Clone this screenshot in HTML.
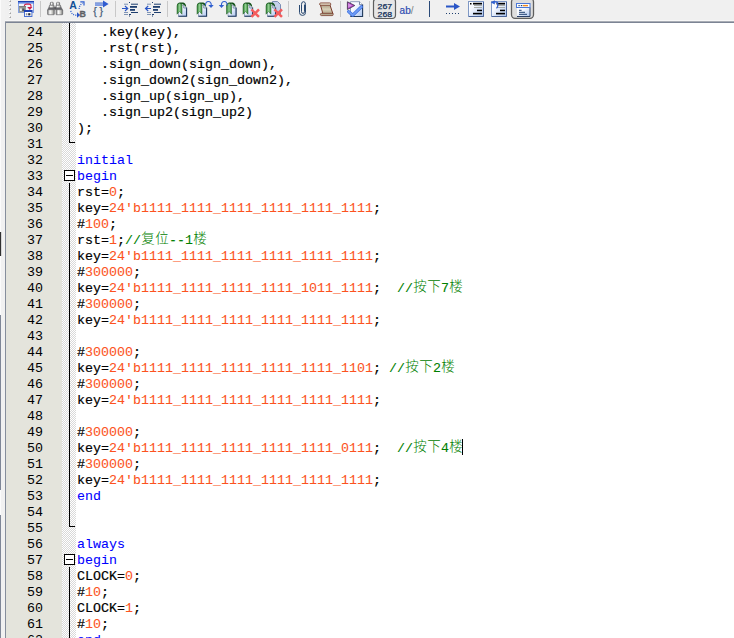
<!DOCTYPE html>
<html lang="zh"><head><meta charset="utf-8"><title>editor</title>
<style>
html,body{margin:0;padding:0;}
body{width:734px;height:638px;overflow:hidden;background:#fff;position:relative;font-family:"Liberation Mono","Noto Sans CJK SC",monospace;}
#tb{position:absolute;left:0;top:0;width:734px;height:21px;background:#f0f0f0;}
#tbline{position:absolute;left:5px;top:20px;width:729px;height:3px;background:linear-gradient(#f7f7f7 1px,#a9adb5 1px,#a9adb5 2px,#7c8494 2px);}
#lstrip{position:absolute;left:0;top:0;width:5px;height:638px;background:linear-gradient(90deg,#fbfbfb 1px,#f1f1f1 1px);}
#lborder{position:absolute;left:5px;top:22px;width:1px;height:616px;background:#868e9c;}
#gut{position:absolute;left:6px;top:23px;width:56px;height:615px;background:#e4e4dc;}
#fold{position:absolute;left:62px;top:23px;width:14px;height:615px;background:#ececec conic-gradient(#ffffff 25%,#d9d9d9 0 50%,#ffffff 0 75%,#d9d9d9 0) 0 0/2px 2px;}
.ln{position:absolute;left:0;height:16px;line-height:16px;font-size:13.33px;white-space:pre;color:#000;}
.num{position:absolute;left:5px;top:2px;width:38px;transform:scaleY(0.89);transform-origin:0 12px;text-align:right;color:#000;}
.code{position:absolute;left:77px;top:2px;-webkit-text-stroke:0.2px currentColor;transform:scaleY(0.89);transform-origin:0 12px;}
i{font-style:normal;-webkit-text-stroke-width:0.08px;}
.k{color:#0000ff;}
.n{color:#fc5220;}
.c{color:#008000;}
b.z{font-weight:300;-webkit-text-stroke-width:0;display:inline-block;width:14px;text-align:center;font-size:13.5px;font-family:"Noto Sans CJK SC","WenQuanYi Zen Hei",sans-serif;vertical-align:top;line-height:16px;height:16px;transform:translateY(-4.5px) scaleY(1.12);}
#caret{position:absolute;left:462px;top:439px;width:1px;height:16px;background:#000;}
svg{position:absolute;left:0;top:0;}
</style></head><body>
<div id="tb"></div>
<div id="lstrip"></div>
<div id="gut"></div>
<div id="fold"></div>
<div id="tbline"></div>
<div id="lborder"></div>
<div id="caret"></div>
<svg id="tbsvg" width="734" height="22" viewBox="0 0 734 22">
<defs>
<linearGradient id="pg" x1="0" y1="0" x2="1" y2="1"><stop offset="0" stop-color="#ffffff"/><stop offset=".35" stop-color="#f6f9ff"/><stop offset="1" stop-color="#a9c3ee"/></linearGradient>
<linearGradient id="gr" x1="0" y1="0" x2="1" y2="0"><stop offset="0" stop-color="#2e7d32"/><stop offset=".5" stop-color="#8fce8f"/><stop offset="1" stop-color="#3c8c40"/></linearGradient>
<linearGradient id="bt" x1="0" y1="0" x2="0" y2="1"><stop offset="0" stop-color="#2a56c6"/><stop offset="1" stop-color="#6f95e8"/></linearGradient>
<linearGradient id="bn" x1="0" y1="0" x2="1" y2="0"><stop offset="0" stop-color="#7c7c7c"/><stop offset=".35" stop-color="#ffffff"/><stop offset=".7" stop-color="#c8c8c4"/><stop offset="1" stop-color="#707070"/></linearGradient>
<linearGradient id="sc" x1="0" y1="0" x2="0" y2="1"><stop offset="0" stop-color="#a89a80"/><stop offset=".5" stop-color="#d8d0b8"/><stop offset="1" stop-color="#b0a488"/></linearGradient>
<g id="bm">
  <path d="M1.500 5.200h5.200l2.800 2.800v8.200h-8z" fill="url(#pg)" stroke="#8c9cb8" stroke-width=".8"/>
  <path d="M9.600 7.500v8.800h-8.200" fill="none" stroke="#1f3a5f" stroke-width="1.100"/>
  <path d="M6.700 5.200v2.800h2.800" fill="none" stroke="#6a7c9c" stroke-width=".8"/>
  <path d="M0 6.500q0-3.900 3.200-3.900h3q2.800.6 3 4.300l-2.200-1.900-2-1.200z" fill="#14521a"/>
  <path d="M0 6q0-2.700 2.800-2.700l2.200 1.200v9.700l-2.400-2.700-2.600 2.700z" fill="url(#gr)" stroke="#1d5a22" stroke-width=".5"/>
</g>
<g id="rx">
  <path d="M0.800 0.800l5.800 5.800M6.600 0.800l-5.800 5.800" stroke="#f45c5c" stroke-width="2.500" fill="none" stroke-linecap="square"/>
</g>
</defs>
<!-- grip -->
<rect x="9" y="0" width="2" height="2" fill="#cacaca"/><rect x="9" y="0" width="1" height="1" fill="#ffffff"/><rect x="10" y="1" width="1" height="1" fill="#a2a2a2"/>
<rect x="9" y="4" width="2" height="2" fill="#cacaca"/><rect x="9" y="4" width="1" height="1" fill="#ffffff"/><rect x="10" y="5" width="1" height="1" fill="#a2a2a2"/>
<rect x="9" y="8" width="2" height="2" fill="#cacaca"/><rect x="9" y="8" width="1" height="1" fill="#ffffff"/><rect x="10" y="9" width="1" height="1" fill="#a2a2a2"/>
<rect x="9" y="12" width="2" height="2" fill="#cacaca"/><rect x="9" y="12" width="1" height="1" fill="#ffffff"/><rect x="10" y="13" width="1" height="1" fill="#a2a2a2"/>
<rect x="9" y="16" width="2" height="2" fill="#cacaca"/><rect x="9" y="16" width="1" height="1" fill="#ffffff"/><rect x="10" y="17" width="1" height="1" fill="#a2a2a2"/>
<!-- separators -->
<g fill="#c8c8c8">
<rect x="40" y="1" width="1" height="16"/><rect x="115" y="1" width="1" height="16"/><rect x="167" y="1" width="1" height="16"/><rect x="288" y="1" width="1" height="16"/><rect x="340" y="1" width="1" height="16"/><rect x="369" y="1" width="1" height="16"/>
</g>
<rect x="429" y="1" width="1" height="16" fill="#2a4a78"/>
<!-- icon1: windows -->
<g>
<rect x="18.500" y="1.500" width="15" height="11" fill="#eef2fd" stroke="#86a2e2" stroke-width="1"/>
<rect x="18" y="1" width="16" height="1.300" fill="#1c40b0"/><rect x="18" y="2.300" width="16" height="1.200" fill="#4472e0"/>
<rect x="19" y="6" width="7" height="6.300" fill="#9a9e9a"/>
<rect x="19" y="6" width="7" height="1.200" fill="#7c807c"/>
<rect x="20" y="8.500" width="1.800" height="2.500" fill="#eceeec"/><rect x="22.300" y="8.500" width="2.200" height="2.500" fill="#50545c"/>
<path d="M24.300 6q.2-1.900 2.200-1.900h2.600q1.900 0 1.900 2v1.200" fill="none" stroke="#d02048" stroke-width="1.100"/>
<path d="M27.200 6.900h5.200l-2.600 3.200z" fill="#d02048"/>
<rect x="24.500" y="10.500" width="7.400" height="6" fill="#ffffff" stroke="#4a70d0" stroke-width="1"/>
<rect x="24" y="10" width="8.400" height="2" fill="#1c40b0"/>
<rect x="25.800" y="13.200" width="1.600" height="2.200" fill="#8c94a4"/><rect x="28.200" y="13.200" width="2.200" height="2.200" fill="#202838"/>
</g>
<!-- binoculars -->
<g id="bino">
<g stroke="#5a5a5e" stroke-width=".6">
<rect x="50.300" y="2.300" width="3" height="3" rx=".8" fill="url(#bn)"/>
<path d="M49.500 5.300h4.500l.4 2.700h-5.600z" fill="url(#bn)"/>
<path d="M48.600 8h5.800l.1 1.700h-6.800z" fill="#6c6c70"/>
<rect x="47.600" y="9.700" width="6.700" height="5" rx=".6" fill="url(#bn)"/>
<rect x="56.600" y="2.300" width="3" height="3" rx=".8" fill="url(#bn)"/>
<path d="M56 5.300h4.500l.7 2.700h-5.600z" fill="url(#bn)"/>
<path d="M55.700 8h5.800l.9 1.700h-6.800z" fill="#6c6c70"/>
<rect x="56" y="9.700" width="6.700" height="5" rx=".6" fill="url(#bn)"/>
</g>
<rect x="54.300" y="7.200" width="1.600" height="2.300" fill="#505054"/>
</g>
<!-- A->B -->
<g>
<text x="69.300" y="9.200" font-family="'Liberation Sans',sans-serif" font-weight="bold" font-size="10.500" fill="#0f4f96" textLength="7.600" lengthAdjust="spacingAndGlyphs">A</text>
<text x="79.600" y="16.600" font-family="'Liberation Sans',sans-serif" font-weight="bold" font-size="9.800" fill="#5c6064" stroke="#5c6064" stroke-width=".3" textLength="6.400" lengthAdjust="spacingAndGlyphs">B</text>
<path d="M70.800 10.800q.8 4.400 6.200 4.400" fill="none" stroke="#3060d0" stroke-width="1.200" stroke-dasharray="1.100 1.100"/>
<path d="M77 12.300l3.200 2.700-3.200 2.700z" fill="#2a56c6"/>
<path d="M79.200 9q-.3-3 3.300-6" fill="none" stroke="#3060d0" stroke-width="1.200" stroke-dasharray="1.100 1.100"/>
<path d="M80.300 1.800h3.700v3.700" fill="none" stroke="#3060d0" stroke-width="1.200"/>
</g>
<!-- {} arrow -->
<g>
<rect x="95" y="2.600" width="9" height="1" fill="#2450c0"/><rect x="95" y="3.600" width="9" height="1" fill="#9ab4f0"/><rect x="95" y="4.600" width="9" height="1" fill="#3a66d8"/>
<path d="M103 0.600l5.600 3.500-5.600 3.500z" fill="#2f5cd0"/>
<text x="93.200" y="15" font-family="'Liberation Sans',sans-serif" font-size="10.500" fill="#465c78" stroke="#465c78" stroke-width=".25">{</text>
<text x="99.600" y="15" font-family="'Liberation Sans',sans-serif" font-size="10.500" fill="#465c78" stroke="#465c78" stroke-width=".25">}</text>
</g>
<!-- indent -->
<g id="ind">
<g fill="#1f3f6f">
<rect x="129" y="2" width="1" height="1"/><rect x="129" y="15.500" width="1" height="1"/>
<rect x="131" y="3.700" width="7" height="1"/>
<rect x="130" y="6" width="7" height="1.800"/>
<rect x="130" y="9" width="5" height="1.800"/>
<rect x="131" y="12" width="7" height="1"/>
<rect x="129" y="14" width="2" height="1"/>
</g>
<g fill="#7f94b4">
<rect x="124" y="3.700" width="4" height="1"/><rect x="124" y="12" width="4" height="1"/><rect x="124" y="14" width="4" height="1"/>
</g>
<path d="M122 8.500h5M125 6l2.700 2.500L125 11" fill="none" stroke="#2a56c6" stroke-width="1.200"/>
</g>
<!-- outdent -->
<g>
<g fill="#1f3f6f">
<rect x="152" y="2" width="1" height="1"/><rect x="152" y="15.500" width="1" height="1"/>
<rect x="154" y="3.700" width="7" height="1"/>
<rect x="153" y="6" width="7" height="1.800"/>
<rect x="153" y="9" width="5" height="1.800"/>
<rect x="154" y="12" width="7" height="1"/>
<rect x="152" y="14" width="2" height="1"/>
</g>
<g fill="#7f94b4">
<rect x="147" y="3.700" width="4" height="1"/><rect x="147" y="12" width="4" height="1"/><rect x="147" y="14" width="4" height="1"/>
</g>
<path d="M145.500 8.500h5.500M148.200 6l-2.700 2.500 2.700 2.500" fill="none" stroke="#2a56c6" stroke-width="1.200"/>
</g>
<!-- bookmarks -->
<use href="#bm" x="177" y="0"/>
<use href="#bm" x="197" y="0"/>
<path d="M205.500 5.500q0-4 2.900-4t2.900 4" fill="none" stroke="#3060d0" stroke-width="1.100"/>
<path d="M208.300 5h5.400l-2.700 3z" fill="#3060d0"/>
<use href="#bm" x="226.500" y="0"/>
<path d="M227.200 5.500q0-4-2.900-4t-2.900 4" fill="none" stroke="#3060d0" stroke-width="1.100"/>
<path d="M218.800 5h5.400l-2.700 3z" fill="#3060d0"/>
<use href="#bm" x="243" y="0"/>
<use href="#rx" x="251.500" y="9.500"/>
<path d="M272.500 1.500h5l3 3v10h-8z" fill="#c4d0ea" stroke="#7a8db4" stroke-width="1"/>
<use href="#bm" x="266" y="0"/>
<use href="#rx" x="274.500" y="9.500"/>
<!-- paperclip -->
<path d="M299.500 5v7.600q0 2.800 3 2.800t3-2.800v-8.300q0-2.600-2-2.600t-2 2.600v7.400q0 1.700 1.500 1.700t1.500-1.700v-7.200" fill="none" stroke="#2b4a72" stroke-width="1"/>
<!-- scroll -->
<path d="M320.300 4.500h9.500l3.200 9.500h-10z" fill="url(#sc)" stroke="#7a3c2c" stroke-width="1"/>
<rect x="319.600" y="2.900" width="11.200" height="2.400" rx="1.200" fill="#e0d8c4" stroke="#7a3c2c" stroke-width="0.800"/>
<rect x="320.400" y="13.300" width="12.800" height="2.300" rx="1.100" fill="#b4a890" stroke="#7a3c2c" stroke-width="0.800"/>
<!-- check page -->
<g>
<path d="M350.500 1.700h9l3 3v11.800h-12z" fill="url(#pg)" stroke="#8796b4" stroke-width=".9"/>
<path d="M362.600 4.500v12h-12.200" fill="none" stroke="#243c5c" stroke-width="1.100"/>
<path d="M359.500 1.700v3h3" fill="#ffffff" stroke="#5a6c8c" stroke-width=".8"/>
<path d="M347.400 1.800l7.400 3.700-7.400 4z" fill="#b848c8" stroke="#3a3048" stroke-width=".8"/>
<path d="M348.100 3.300l4 2.200-4 2.200z" fill="#d890e4"/>
<path d="M348.600 11.600l4.200 3.600 8.600-8.400" fill="none" stroke="#3c6ee0" stroke-width="3.200" stroke-linecap="round" stroke-linejoin="round"/>
<path d="M348.600 11.600l4.200 3.600 8.600-8.400" fill="none" stroke="#6e9cf4" stroke-width="1.800" stroke-linecap="round" stroke-linejoin="round"/>
</g>
<!-- 267/268 button -->
<rect x="373.500" y="-1.500" width="22" height="20" rx="3.500" ry="3.500" fill="#e6e6e6" stroke="#5e5e5e" stroke-width="1.200"/>
<text x="377.600" y="8.800" font-family="'Liberation Sans',sans-serif" font-size="8" fill="#12305a" stroke="#12305a" stroke-width=".25" textLength="14.600" lengthAdjust="spacingAndGlyphs">267</text>
<text x="377.600" y="16.900" font-family="'Liberation Sans',sans-serif" font-size="8" fill="#12305a" stroke="#12305a" stroke-width=".25" textLength="14.600" lengthAdjust="spacingAndGlyphs">268</text>
<!-- ab/ -->
<text x="399.600" y="13.500" font-family="'Liberation Sans',sans-serif" font-size="10" fill="#2c4cb0" stroke="#2c4cb0" stroke-width=".2">ab<tspan fill="#808080" stroke="none">/</tspan></text>
<!-- arrow dotted -->
<g>
<rect x="446" y="5.500" width="9" height="2" fill="#2a56c6"/>
<path d="M454 3l6 3.500-6 3.500z" fill="#2a56c6"/>
<g fill="#1f3f6f"><rect x="446" y="13" width="1" height="1"/><rect x="449" y="13" width="1" height="1"/><rect x="452" y="13" width="1" height="1"/><rect x="455" y="13" width="1" height="1"/><rect x="458" y="13" width="1" height="1"/></g>
</g>
<!-- page icons -->
<g>
<rect x="468.500" y="1.500" width="15" height="15" fill="url(#pg)" stroke="#7f98c4" stroke-width="1"/>
<path d="M483.500 2v14.500h-14.500" fill="none" stroke="#4a6498" stroke-width="1"/>
<rect x="470" y="3" width="1.500" height="1.500" fill="#000"/>
<rect x="473" y="2.800" width="9" height="1.700" fill="#000"/>
<rect x="474" y="5" width="8" height="1" fill="#a8aca8"/><rect x="474" y="7" width="8" height="1" fill="#a8aca8"/>
<rect x="477" y="9.700" width="5" height="1.500" fill="#000"/><rect x="473" y="12.800" width="9" height="1.600" fill="#000"/>
</g>
<g>
<rect x="491.500" y="1.500" width="15" height="15" fill="url(#pg)" stroke="#7f98c4" stroke-width="1"/>
<path d="M506.500 2v14.500h-14.500" fill="none" stroke="#4a6498" stroke-width="1"/>
<rect x="496.500" y="2.800" width="8.500" height="1.700" fill="#000"/>
<rect x="497" y="5" width="8" height="1" fill="#a8aca8"/><rect x="497" y="7" width="8" height="1" fill="#a8aca8"/>
<rect x="500" y="9.700" width="5" height="1.500" fill="#000"/><rect x="496" y="12.800" width="9" height="1.600" fill="#000"/>
<path d="M493.500 2q4.300-1 4.500 2.500q0 2-1.500 3.800" fill="none" stroke="#3060d0" stroke-width="1.200"/>
<path d="M490.800 2.600l4-2.400v4.400z" fill="#3060d0"/>
</g>
<rect x="511.500" y="-1.500" width="22" height="19.800" rx="3.500" ry="3.500" fill="#dedede" stroke="#5e5e5e" stroke-width="1.300"/>
<g>
<rect x="517" y="7.500" width="13" height="9" fill="url(#pg)"/>
<path d="M530 7.500v9h-13" fill="none" stroke="#2a4068" stroke-width="1"/>
<rect x="516.500" y="3.500" width="13.500" height="4" fill="#ffffff" stroke="#4a78d8" stroke-width="1"/>
<rect x="518.500" y="5" width="1.200" height="1.200" fill="#1f3f6f"/><rect x="520.800" y="5" width="1.500" height="1.200" fill="#1f3f6f"/><rect x="523" y="4.900" width="5" height="1.400" fill="#f08a20"/>
<rect x="519" y="9.800" width="2.600" height="1" fill="#1f3f6f"/><rect x="519" y="11.800" width="6" height="1" fill="#1f3f6f"/><rect x="519" y="13.800" width="8" height="1" fill="#1f3f6f"/>
</g>
</svg>

<div class="ln" style="top:23px"><span class="num">24</span><span class="code">   .key(key),</span></div>
<div class="ln" style="top:39px"><span class="num">25</span><span class="code">   .rst(rst),</span></div>
<div class="ln" style="top:55px"><span class="num">26</span><span class="code">   .sign_down(sign_down),</span></div>
<div class="ln" style="top:71px"><span class="num">27</span><span class="code">   .sign_down2(sign_down2),</span></div>
<div class="ln" style="top:87px"><span class="num">28</span><span class="code">   .sign_up(sign_up),</span></div>
<div class="ln" style="top:103px"><span class="num">29</span><span class="code">   .sign_up2(sign_up2)</span></div>
<div class="ln" style="top:119px"><span class="num">30</span><span class="code">);</span></div>
<div class="ln" style="top:135px"><span class="num">31</span><span class="code"></span></div>
<div class="ln" style="top:151px"><span class="num">32</span><span class="code"><i class="k">initial</i></span></div>
<div class="ln" style="top:167px"><span class="num">33</span><span class="code"><i class="k">begin</i></span></div>
<div class="ln" style="top:183px"><span class="num">34</span><span class="code">rst=<i class="n">0</i>;</span></div>
<div class="ln" style="top:199px"><span class="num">35</span><span class="code">key=<i class="n">24'b1111_1111_1111_1111_1111_1111</i>;</span></div>
<div class="ln" style="top:215px"><span class="num">36</span><span class="code">#<i class="n">100</i>;</span></div>
<div class="ln" style="top:231px"><span class="num">37</span><span class="code">rst=<i class="n">1</i>;<i class="c">//<b class="z">复</b><b class="z">位</b>--1<b class="z">楼</b></i></span></div>
<div class="ln" style="top:247px"><span class="num">38</span><span class="code">key=<i class="n">24'b1111_1111_1111_1111_1111_1111</i>;</span></div>
<div class="ln" style="top:263px"><span class="num">39</span><span class="code">#<i class="n">300000</i>;</span></div>
<div class="ln" style="top:279px"><span class="num">40</span><span class="code">key=<i class="n">24'b1111_1111_1111_1111_1011_1111</i>;  <i class="c">//<b class="z">按</b><b class="z">下</b>7<b class="z">楼</b></i></span></div>
<div class="ln" style="top:295px"><span class="num">41</span><span class="code">#<i class="n">300000</i>;</span></div>
<div class="ln" style="top:311px"><span class="num">42</span><span class="code">key=<i class="n">24'b1111_1111_1111_1111_1111_1111</i>;</span></div>
<div class="ln" style="top:327px"><span class="num">43</span><span class="code"></span></div>
<div class="ln" style="top:343px"><span class="num">44</span><span class="code">#<i class="n">300000</i>;</span></div>
<div class="ln" style="top:359px"><span class="num">45</span><span class="code">key=<i class="n">24'b1111_1111_1111_1111_1111_1101</i>; <i class="c">//<b class="z">按</b><b class="z">下</b>2<b class="z">楼</b></i></span></div>
<div class="ln" style="top:375px"><span class="num">46</span><span class="code">#<i class="n">300000</i>;</span></div>
<div class="ln" style="top:391px"><span class="num">47</span><span class="code">key=<i class="n">24'b1111_1111_1111_1111_1111_1111</i>;</span></div>
<div class="ln" style="top:407px"><span class="num">48</span><span class="code"></span></div>
<div class="ln" style="top:423px"><span class="num">49</span><span class="code">#<i class="n">300000</i>;</span></div>
<div class="ln" style="top:439px"><span class="num">50</span><span class="code">key=<i class="n">24'b1111_1111_1111_1111_1111_0111</i>;  <i class="c">//<b class="z">按</b><b class="z">下</b>4<b class="z">楼</b></i></span></div>
<div class="ln" style="top:455px"><span class="num">51</span><span class="code">#<i class="n">300000</i>;</span></div>
<div class="ln" style="top:471px"><span class="num">52</span><span class="code">key=<i class="n">24'b1111_1111_1111_1111_1111_1111</i>;</span></div>
<div class="ln" style="top:487px"><span class="num">53</span><span class="code"><i class="k">end</i></span></div>
<div class="ln" style="top:503px"><span class="num">54</span><span class="code"></span></div>
<div class="ln" style="top:519px"><span class="num">55</span><span class="code"></span></div>
<div class="ln" style="top:535px"><span class="num">56</span><span class="code"><i class="k">always</i></span></div>
<div class="ln" style="top:551px"><span class="num">57</span><span class="code"><i class="k">begin</i></span></div>
<div class="ln" style="top:567px"><span class="num">58</span><span class="code">CLOCK=<i class="n">0</i>;</span></div>
<div class="ln" style="top:583px"><span class="num">59</span><span class="code">#<i class="n">10</i>;</span></div>
<div class="ln" style="top:599px"><span class="num">60</span><span class="code">CLOCK=<i class="n">1</i>;</span></div>
<div class="ln" style="top:615px"><span class="num">61</span><span class="code">#<i class="n">10</i>;</span></div>
<div class="ln" style="top:631px"><span class="num">62</span><span class="code"><i class="k">end</i></span></div>
<svg id="foldsvg" width="80" height="638" viewBox="0 0 80 638" shape-rendering="crispEdges">
<g fill="#000">
<rect x="69" y="23" width="1" height="120"/>
<rect x="69" y="142" width="6" height="1"/>
<rect x="69" y="183" width="1" height="344"/>
<rect x="69" y="526" width="6" height="1"/>
<rect x="69" y="567" width="1" height="71"/>
</g>
<g fill="#fff" stroke="#000" stroke-width="1">
<rect x="64.500" y="170.500" width="10" height="10"/>
<rect x="64.500" y="554.500" width="10" height="10"/>
</g>
<g fill="#000">
<rect x="66" y="175" width="7" height="1"/>
<rect x="66" y="559" width="7" height="1"/>
</g>
<g>
<rect x="0" y="232" width="1" height="24" fill="#303030"/><rect x="1" y="232" width="1" height="24" fill="#b8b8b8" opacity=".5"/>
<rect x="0" y="315" width="1" height="175" fill="#7f8797"/>
<rect x="0" y="515" width="1" height="123" fill="#7f8797"/>
</g>
</svg>

</body></html>
